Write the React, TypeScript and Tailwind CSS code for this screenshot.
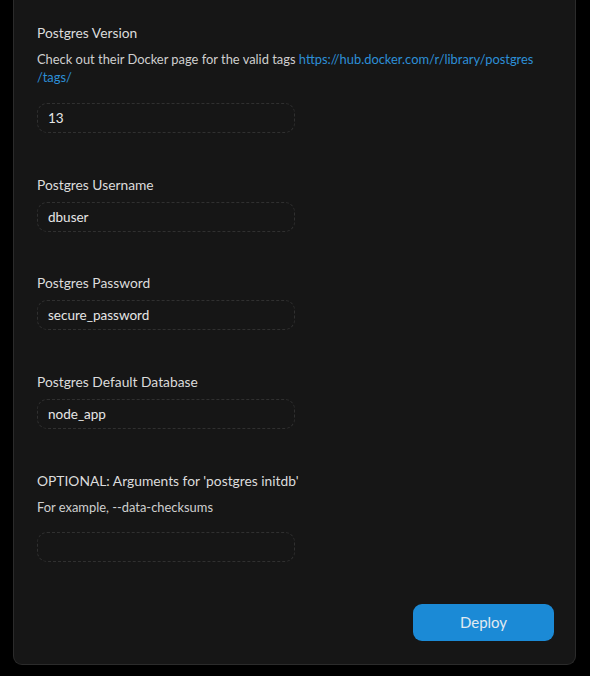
const fields = [
  { label: "Postgres Username", value: "dbuser" },
  { label: "Postgres Password", value: "secure_password" },
  { label: "Postgres Default Database", value: "node_app" },
];

function Field({ value }: { value: string }) {
  return (
    <input
      type="text"
      defaultValue={value}
      className="w-[258px] h-[30px] px-[10px] bg-transparent border border-dashed border-[#303030] rounded-[10px] text-[13.5px] text-[#e6e6e6] outline-none"
    />
  );
}

export default function App() {
  return (
    <div className="min-h-[676px] bg-black pl-[13px] pr-[14px] pb-[12px] font-['Lato',sans-serif]">
      <div className="bg-[#161616] border border-t-0 border-[#2b2b2b] rounded-b-[9px] pl-[23px] pr-[21px] pt-[24px] pb-[23px]">
        {/* Version */}
        <div>
          <div className="text-[13.8px] text-[#dcdcdc] leading-[18px]">Postgres Version</div>
          <p className="mt-[8px] text-[12.9px] leading-[18px] text-[#cfcfcf]">
            Check out their Docker page for the valid tags{" "}
            <a href="#" className="text-[#2d8fd6]">
              https://hub.docker.com/r/library/postgres
              <br />
              /tags/
            </a>
          </p>
          <div className="mt-[17px]">
            <Field value="13" />
          </div>
        </div>

        {fields.map((f) => (
          <div key={f.label} className="mt-[42.7px]">
            <div className="text-[13.8px] text-[#dcdcdc] leading-[18px]">{f.label}</div>
            <div className="mt-[8px]">
              <Field value={f.value} />
            </div>
          </div>
        ))}

        {/* Optional */}
        <div className="mt-[42.7px]">
          <div className="text-[13.8px] text-[#dcdcdc] leading-[18px]">
            OPTIONAL: Arguments for 'postgres initdb'
          </div>
          <div className="mt-[8px] text-[12.9px] leading-[18px] text-[#cfcfcf]">
            For example, --data-checksums
          </div>
          <div className="mt-[16px]">
            <Field value="" />
          </div>
        </div>

        <div className="flex justify-end mt-[42px]">
          <button className="w-[141px] h-[37px] rounded-[9px] bg-[#1b8ad6] text-[15px] text-[#e2eaf1]">
            Deploy
          </button>
        </div>
      </div>
    </div>
  );
}
